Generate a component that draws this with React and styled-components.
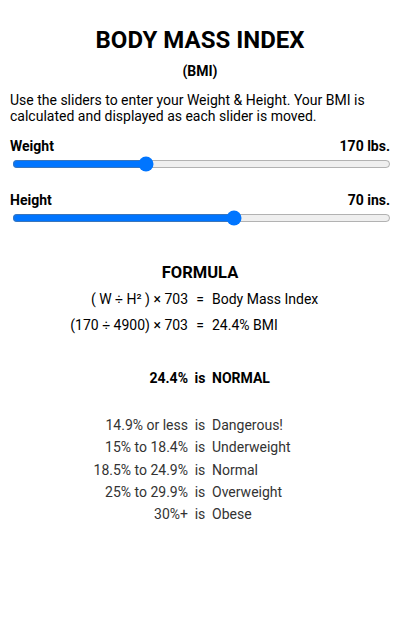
import { useState } from "react";
import styled, { createGlobalStyle } from "styled-components";

const GlobalStyle = createGlobalStyle`
  body {
    margin: 0;
    background: #fff;
    font-family: Roboto, "Liberation Sans", sans-serif;
    color: #000;
  }
`;

const RANGES = [
  ["14.9% or less", "Dangerous!"],
  ["15% to 18.4%", "Underweight"],
  ["18.5% to 24.9%", "Normal"],
  ["25% to 29.9%", "Overweight"],
  ["30%+", "Obese"],
];

function category(bmi) {
  if (bmi < 15) return "DANGEROUS!";
  if (bmi < 18.5) return "UNDERWEIGHT";
  if (bmi < 25) return "NORMAL";
  if (bmi < 30) return "OVERWEIGHT";
  return "OBESE";
}

function App() {
  const [weight, setWeight] = useState(170);
  const [height, setHeight] = useState(70);
  const sq = height * height;
  const bmi = ((weight / sq) * 703).toFixed(1);

  return (
    <>
      <GlobalStyle />
      <Page>
        <Title>BODY MASS INDEX</Title>
        <Sub>(BMI)</Sub>
        <Intro>
          Use the sliders to enter your Weight &amp; Height. Your BMI is
          calculated and displayed as each slider is moved.
        </Intro>

        <Field>
          <LabelRow>
            <span>Weight</span>
            <span>{weight} lbs.</span>
          </LabelRow>
          <Slider
            type="range"
            min="0"
            max="490"
            value={weight}
            onChange={(e) => setWeight(+e.target.value)}
          />
        </Field>

        <Field $gap>
          <LabelRow>
            <span>Height</span>
            <span>{height} ins.</span>
          </LabelRow>
          <Slider
            type="range"
            min="0"
            max="119"
            value={height}
            onChange={(e) => setHeight(+e.target.value)}
          />
        </Field>

        <Heading>FORMULA</Heading>
        <Table $row={26}>
          <Left>( W ÷ H² ) × 703</Left>
          <Mid>=</Mid>
          <Right>Body Mass Index</Right>
          <Left>
            ({weight} ÷ {sq}) × 703
          </Left>
          <Mid>=</Mid>
          <Right>{bmi}% BMI</Right>
        </Table>

        <Result $row={16}>
          <Left>{bmi}%</Left>
          <Mid>is</Mid>
          <Right>{category(bmi)}</Right>
        </Result>

        <Table $row={22.3} $muted>
          {RANGES.map(([a, b]) => (
            <Row key={a}>
              <Left>{a}</Left>
              <Mid>is</Mid>
              <Right>{b}</Right>
            </Row>
          ))}
        </Table>
      </Page>
    </>
  );
}

const Page = styled.div`
  padding: 26px 10px 40px;
  font-size: 14px;
`;

const Title = styled.h1`
  margin: 0;
  font-size: 24px;
  font-weight: 700;
  text-align: center;
`;

const Sub = styled.div`
  margin-top: 9px;
  font-weight: 700;
  text-align: center;
`;

const Intro = styled.p`
  margin: 13px 0 0;
  line-height: 16px;
`;

const Field = styled.div`
  margin-top: ${(p) => (p.$gap ? "20px" : "14px")};
`;

const LabelRow = styled.div`
  display: flex;
  justify-content: space-between;
  font-weight: 700;
`;

const Slider = styled.input`
  display: block;
  width: calc(100% - 1px);
  margin: 2px 0 0 2px;
`;

const Heading = styled.div`
  margin-top: 37px;
  font-size: 16.5px;
  font-weight: 700;
  text-align: center;
`;

const Table = styled.div`
  display: grid;
  grid-template-columns: 1fr 24px 1fr;
  grid-auto-rows: ${(p) => p.$row}px;
  align-items: center;
  margin-top: 4px;
  color: ${(p) => (p.$muted ? "#333" : "#000")};
`;

const Result = styled(Table)`
  margin: 32px 0 28px;
  font-weight: 700;
`;

const Row = styled.div`
  display: contents;
`;

const Left = styled.div`
  text-align: right;
`;

const Mid = styled.div`
  text-align: center;
`;

const Right = styled.div`
  text-align: left;
`;

export default App;
